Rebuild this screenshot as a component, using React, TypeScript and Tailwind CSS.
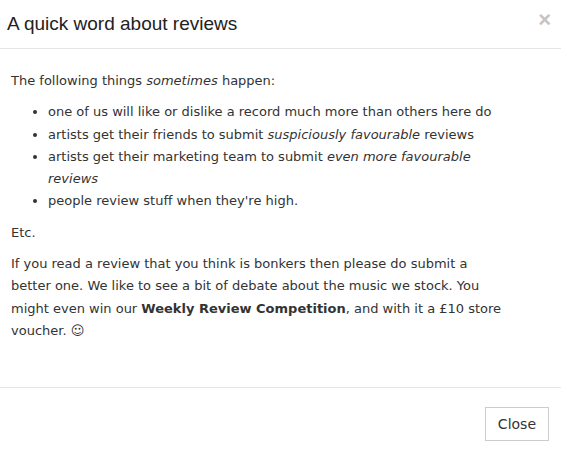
import React from 'react'

const App: React.FC = () => {
  return (
    <div className="w-[561px] h-[455px] bg-white flex flex-col text-[#333]">
      <div className="h-[49px] border-b border-[#e5e5e5] flex items-center justify-between pl-[7px] pr-[10px]">
        <h4 className="text-[19px] leading-none font-['Liberation_Sans',Arial,sans-serif] text-[#222] -mt-[2px]">
          A quick word about reviews
        </h4>
        <button className="text-[22px] leading-none font-bold text-[#c4c4c4] font-['Liberation_Sans',Arial,sans-serif] -mt-[9px]">
          ×
        </button>
      </div>

      <div className="pl-[11px] pr-[51px] pt-[21px] pb-[22px] text-[13px] leading-[22.3px] font-['DejaVu_Sans',Verdana,sans-serif] flex flex-col gap-[9px]">
        <p>
          The following things <em>sometimes</em> happen:
        </p>
        <ul className="list-disc pl-[37px]">
          <li>one of us will like or dislike a record much more than others here do</li>
          <li>
            artists get their friends to submit <em>suspiciously favourable</em> reviews
          </li>
          <li>
            artists get their marketing team to submit <em>even more favourable reviews</em>
          </li>
          <li>people review stuff when they're high.</li>
        </ul>
        <p>Etc.</p>
        <p>
          If you read a review that you think is bonkers then please do submit a better one. We
          like to see a bit of debate about the music we stock. You might even win our{' '}
          <strong>Weekly Review Competition</strong>, and with it a £10 store voucher. ☺
        </p>
      </div>

      <div className="mt-auto border-t border-[#e5e5e5] flex justify-end pt-[19px] pb-[14px] pr-[12px]">
        <button className="h-[34px] px-[12px] border border-[#ccc] bg-white text-[14px] text-[#333] font-['DejaVu_Sans',Verdana,sans-serif]">
          Close
        </button>
      </div>
    </div>
  )
}

export default App
